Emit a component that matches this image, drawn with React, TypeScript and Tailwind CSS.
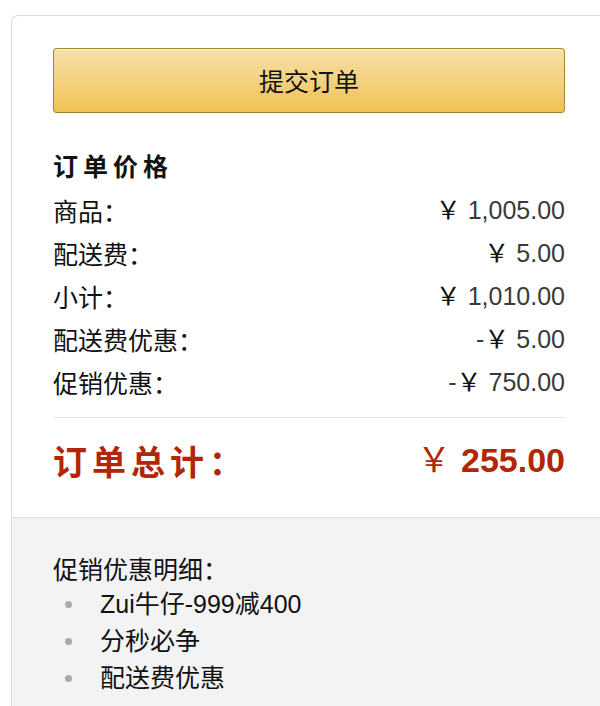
const priceRows = [
  { label: '商品：', minus: false, amount: '1,005.00' },
  { label: '配送费：', minus: false, amount: '5.00' },
  { label: '小计：', minus: false, amount: '1,010.00' },
  { label: '配送费优惠：', minus: true, amount: '5.00' },
  { label: '促销优惠：', minus: true, amount: '750.00' },
];

const promos = ['Zui牛仔-999减400', '分秒必争', '配送费优惠'];

const font = "font-['Liberation_Sans','Noto_Sans_CJK_SC',sans-serif]";

export default function App() {
  return (
    <div className={`w-[600px] h-[706px] overflow-hidden bg-white pt-[15px] pl-[11px] ${font}`}>
      <div className="mr-[-30px] h-full border-l border-t border-[#dddddd] rounded-tl-[7px] bg-white">
        <div className="pl-[41px] pt-[32px] pb-[32px]">
          <div className="w-[512px]">
            <button className="w-full h-[65px] rounded-[4px] border border-[#a88734] border-b-[#9c7e31] bg-gradient-to-b from-[#f7e0a7] to-[#f0c24f] shadow-[inset_0_1px_0_rgba(255,255,255,0.6)] text-[25px] text-[#111] font-['Noto_Sans_CJK_SC',sans-serif]">
              提交订单
            </button>

            <h2 className="mt-[34px] h-[36px] leading-[36px] text-[25px] font-bold tracking-[5px] text-[#111] font-['Noto_Sans_CJK_SC',sans-serif]">
              订单价格
            </h2>

            <div className="mt-[6px]">
              {priceRows.map((row) => (
                <div key={row.label} className="flex justify-between items-center h-[43px] text-[25px]">
                  <span className="text-[#111] font-['Noto_Sans_CJK_SC',sans-serif]">{row.label}</span>
                  <span className="flex items-center text-[#3a3a3a]">
                    {row.minus && <span>-</span>}
                    <span className="text-[#111]">￥</span>
                    <span className="ml-[7px]">{row.amount}</span>
                  </span>
                </div>
              ))}
            </div>

            <div className="mt-[13px] border-t border-[#e7e7e7]" />

            <div className="mt-[17px] flex justify-between items-center h-[50px] text-[#b12704] font-bold">
              <span className="text-[34px] tracking-[5px] font-['Noto_Sans_CJK_SC',sans-serif]">订单总计：</span>
              <span className="flex items-center text-[34px]">
                <span className="font-normal">￥</span>
                <span className="ml-[10px]">255.00</span>
              </span>
            </div>
          </div>
        </div>

        <div className="h-full border-t border-[#dddddd] bg-[#f3f3f3] pl-[41px] pt-[32px]">
          <div className="h-[36px] leading-[36px] text-[25px] text-[#111] font-['Noto_Sans_CJK_SC',sans-serif]">
            促销优惠明细：
          </div>
          <ul>
            {promos.map((p) => (
              <li key={p} className="flex items-center h-[37px] text-[25px] text-[#111]">
                <span className="ml-[12px] w-[7px] h-[7px] rounded-full bg-[#aaaaaa]" />
                <span className="ml-[28px]">{p}</span>
              </li>
            ))}
          </ul>
        </div>
      </div>
    </div>
  );
}
